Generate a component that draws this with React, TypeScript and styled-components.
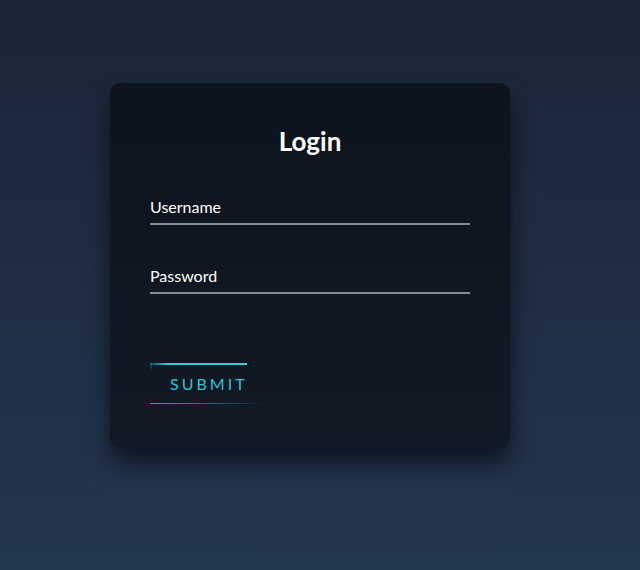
import * as React from "react";
import styled, { createGlobalStyle } from "styled-components";

const GlobalStyle = createGlobalStyle`
  html, body {
    margin: 0;
    padding: 0;
  }
  body {
    font-family: Lato, "Liberation Sans", sans-serif;
    background: linear-gradient(#1b2537, #23374f);
    min-height: 570px;
  }
`;

const SPage = styled.div`
  min-height: 570px;
  box-sizing: border-box;
  padding: 83px 0 0 110px;
`;

const SBox = styled.div`
  width: 400px;
  box-sizing: border-box;
  padding: 40px 40px 43px;
  background: rgba(0, 0, 0, 0.5);
  border-radius: 10px;
  box-shadow: 0 15px 25px rgba(0, 0, 0, 0.6);
`;

const STitle = styled.h2`
  margin: 0 0 38px;
  padding: 0;
  color: #fff;
  font-size: 26px;
  font-weight: 700;
  line-height: 36px;
  text-align: center;
`;

const SForm = styled.form`
  display: flex;
  flex-direction: column;
  align-items: flex-start;
  gap: 41px;
`;

const SUserBox = styled.div`
  width: 100%;
  padding-bottom: 6px;
  border-bottom: 2px solid rgba(255, 255, 255, 0.5);
`;

const SLabel = styled.label`
  display: block;
  color: #fff;
  font-size: 16px;
  line-height: 20px;
`;

const SButton = styled.a`
  position: relative;
  display: inline-block;
  margin-top: 28px;
  padding: 11px 20px;
  color: #2ec6d4;
  font-size: 16px;
  line-height: 20px;
  letter-spacing: 3px;
  text-transform: uppercase;
  text-decoration: none;
  overflow: hidden;
`;

interface ILineProps {
  side: "top" | "bottom" | "left";
}

const SLine = styled.span<ILineProps>`
  position: absolute;
  left: 0;
  ${({ side }) =>
    side === "top"
      ? `top: 0; width: 97px; height: 2px;
         background: linear-gradient(90deg, rgba(3, 200, 215, 0.25), #3ac8d4 18%, #3ac8d4);`
      : side === "bottom"
      ? `bottom: 1px; width: 115px; height: 1px;
         background: linear-gradient(90deg, #2aaab8, rgba(42, 170, 184, 0.5) 60%, transparent);`
      : `top: 0; width: 2px; height: 9px;
         background: linear-gradient(180deg, rgba(3, 200, 215, 0.35), transparent);`}
`;

const App = () => (
  <SPage>
    <GlobalStyle />
    <SBox>
      <STitle>Login</STitle>
      <SForm onSubmit={e => e.preventDefault()}>
        <SUserBox>
          <SLabel>Username</SLabel>
        </SUserBox>
        <SUserBox>
          <SLabel>Password</SLabel>
        </SUserBox>
        <SButton href="#">
          <SLine side="top" />
          <SLine side="left" />
          <SLine side="bottom" />
          Submit
        </SButton>
      </SForm>
    </SBox>
  </SPage>
);

export default App;
